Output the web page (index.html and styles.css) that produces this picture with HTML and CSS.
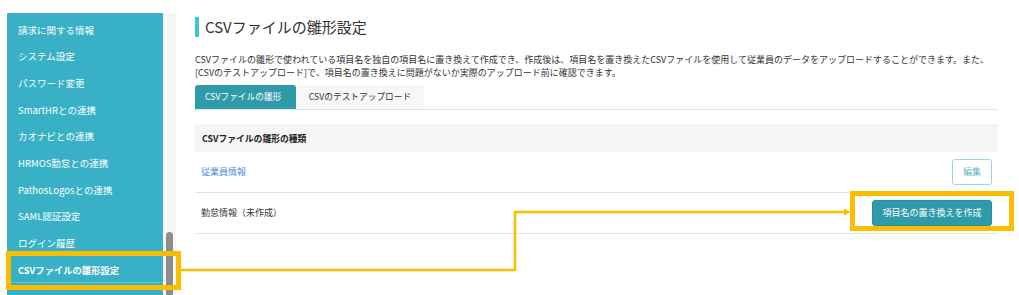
FILE: index.html
```html
<!DOCTYPE html>
<html lang="ja">

<head>
    <meta charset="UTF-8">
    <meta name="viewport" content="width=device-width, initial-scale=1.0">
    <title>CSVファイルの雛形設定</title>
    <link rel="stylesheet" href="styles.css">
</head>

<body>
    <div class="page">
        <nav class="sidebar">
            <ul class="menu">
                <li>請求に関する情報</li>
                <li>システム設定</li>
                <li>パスワード変更</li>
                <li>SmartHRとの連携</li>
                <li>カオナビとの連携</li>
                <li>HRMOS勤怠との連携</li>
                <li>PathosLogosとの連携</li>
                <li>SAML認証設定</li>
                <li>ログイン履歴</li>
                <li class="active">CSVファイルの雛形設定</li>
            </ul>
        </nav>
        <div class="scroll-track">
            <div class="scroll-thumb"></div>
        </div>

        <main class="content">
            <h1 class="page-title">CSVファイルの雛形設定</h1>
            <p class="lead">
                CSVファイルの雛形で使われている項目名を独自の項目名に置き換えて作成でき、作成後は、項目名を置き換えたCSVファイルを使用して従業員のデータをアップロードすることができます。また、<br>
                [CSVのテストアップロード]で、項目名の置き換えに問題がないか実際のアップロード前に確認できます。
            </p>

            <div class="tabs">
                <span class="tab active">CSVファイルの雛形</span>
                <span class="tab">CSVのテストアップロード</span>
            </div>

            <table class="templates">
                <thead>
                    <tr>
                        <th colspan="2">CSVファイルの雛形の種類</th>
                    </tr>
                </thead>
                <tbody>
                    <tr class="row-employee">
                        <td><a href="#">従業員情報</a></td>
                        <td class="actions"><button class="btn btn-outline">編集</button></td>
                    </tr>
                    <tr class="row-attendance">
                        <td>勤怠情報（未作成）</td>
                        <td class="actions"><button class="btn btn-primary">項目名の置き換えを作成</button></td>
                    </tr>
                </tbody>
            </table>
        </main>
    </div>

    <!-- annotation overlay -->
    <div class="highlight highlight-menu"></div>
    <div class="highlight highlight-button"></div>
    <svg class="connector" width="1019" height="295" viewBox="0 0 1019 295">
        <polyline points="181,270 515,270 515,212 846,212" fill="none" stroke="#fbbd00" stroke-width="2.5" />
        <polygon points="844,208.5 851,212 844,215.5" fill="#fbbd00" />
    </svg>
</body>

</html>
```

FILE: styles.css
```css
* {
    box-sizing: border-box;
}

html,
body {
    margin: 0;
    height: 295px;
    overflow: hidden;
}

body {
    font-family: "Noto Sans CJK JP", "Noto Sans", sans-serif;
    color: #333;
    background: #fff;
}

.page {
    display: flex;
    height: 295px;
}

.sidebar {
    width: 156px;
    margin: 13px 0 0 7px;
    background-color: #38b1c6;
}

.menu {
    list-style: none;
    margin: 0;
    padding: 3.7px 0 0;
}

.menu li {
    height: 26.67px;
    line-height: 26.67px;
    padding-left: 11px;
    font-size: 9.5px;
    color: #fff;
    white-space: nowrap;
}

.menu li.active {
    font-weight: bold;
    font-size: 9.3px;
    border-bottom: 1px solid #5cc3d5;
}

.scroll-track {
    width: 13px;
    background: #f6f6f6;
    position: relative;
    overflow: hidden;
    margin-top: 13px;
}

.scroll-thumb {
    position: absolute;
    left: 3px;
    top: 219px;
    width: 7px;
    height: 80px;
    border-radius: 4px;
    background: #8d8d8d;
}

.content {
    flex: 1;
    padding: 0 21px 0 19px;
}

.page-title {
    margin: 17px 0 0;
    border-left: 4px solid #3cc4da;
    padding-left: 6px;
    font-size: 15px;
    font-weight: normal;
    line-height: 20px;
    color: #333;
}

.lead {
    margin: 17px 0 0;
    font-size: 9px;
    line-height: 12.5px;
    color: #333;
}

.tabs {
    display: flex;
    margin-top: 6px;
    border-bottom: 1px solid #e3e3e3;
}

.tab {
    display: block;
    height: 24px;
    line-height: 24px;
    padding: 0 10px;
    font-size: 8.7px;
    background: #f7f7f7;
    color: #333;
}

.tab.active {
    width: 101px;
    background: #2f9ba9;
    color: #fff;
    border-radius: 3px 3px 0 0;
}

.tab + .tab {
    width: 128px;
    text-align: center;
}

.templates {
    width: 100%;
    border-collapse: collapse;
    margin-top: 14px;
}

.templates th {
    height: 28px;
    padding: 0 7px;
    text-align: left;
    font-size: 8.8px;
    background: #f5f5f5;
    color: #222;
}

.templates td {
    padding: 0 6px;
    font-size: 9px;
    border-bottom: 1px solid #e4e4e4;
}

.row-employee td {
    height: 40px;
}

.row-attendance td {
    height: 41px;
}

.templates a {
    color: #4a8fd6;
    text-decoration: none;
}

.actions {
    text-align: right;
}

.btn {
    font-family: inherit;
    font-size: 9px;
    height: 26px;
    border-radius: 3px;
    cursor: pointer;
    vertical-align: middle;
}

.btn-outline {
    width: 40px;
    background: #fff;
    border: 1px solid #9fd3dd;
    color: #6ab7c5;
}

.btn-primary {
    width: 120px;
    background: #2f9ba9;
    border: 1px solid #2a8e9b;
    color: #fff;
}

.highlight {
    position: absolute;
    border: 5px solid #fbbd00;
}

.highlight-menu {
    left: 6px;
    top: 251px;
    width: 175px;
    height: 39px;
}

.highlight-button {
    left: 850px;
    top: 191px;
    width: 164px;
    height: 40px;
}

.connector {
    position: absolute;
    left: 0;
    top: 0;
    pointer-events: none;
}
```
